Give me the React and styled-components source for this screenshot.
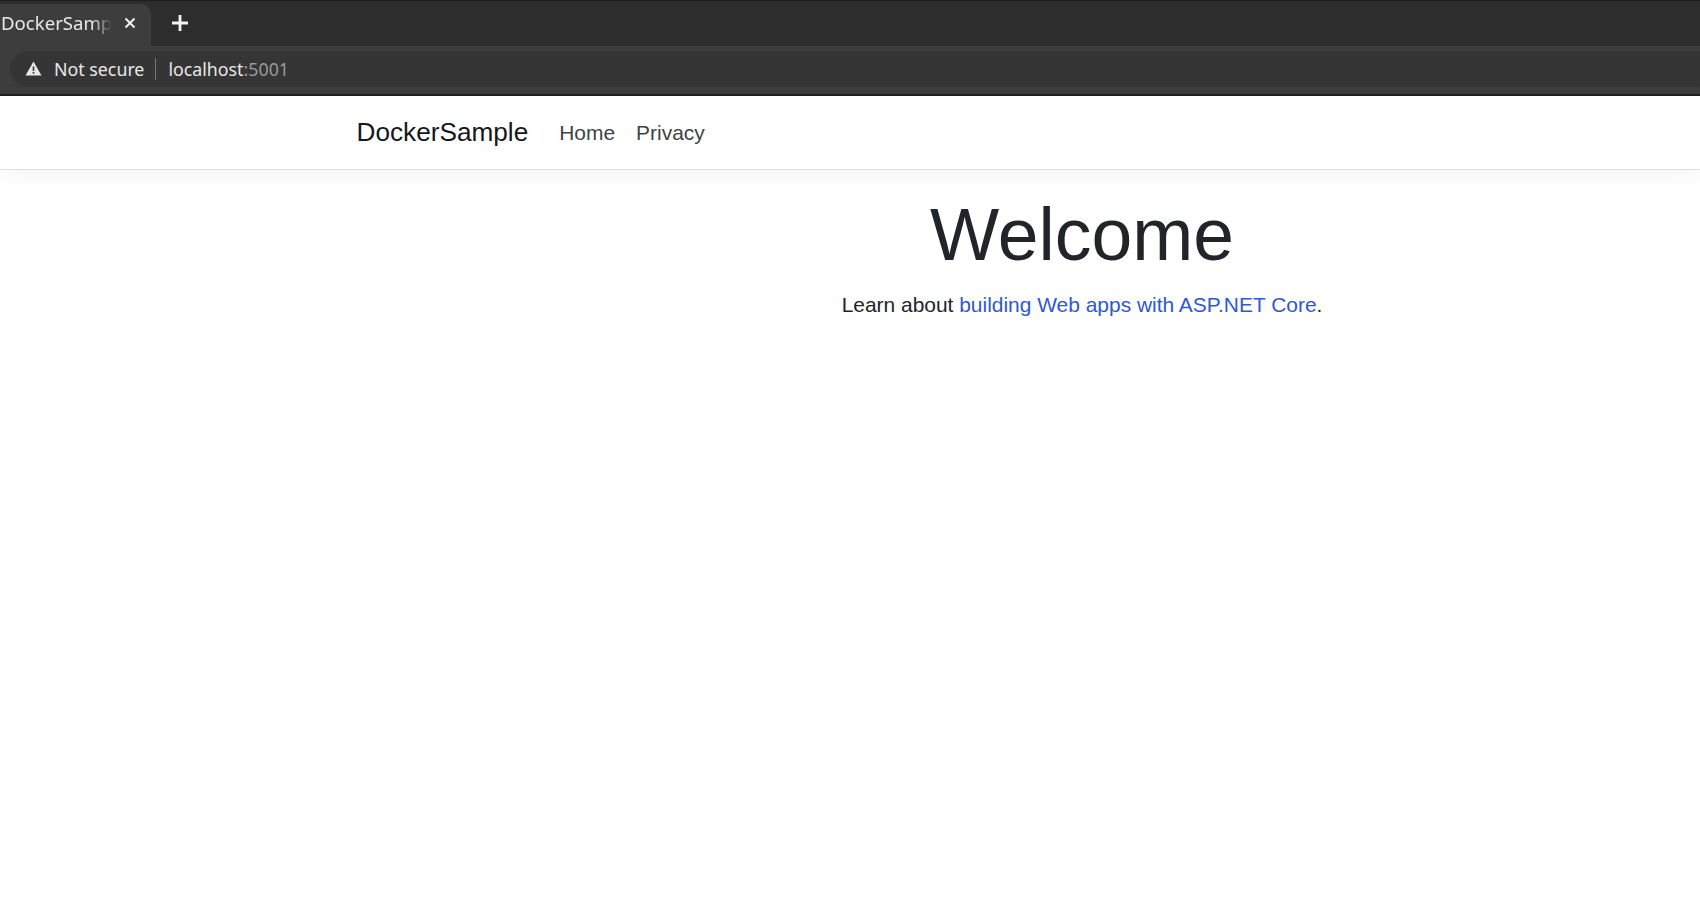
import React from 'react'
import styled, { createGlobalStyle } from 'styled-components'

const GlobalStyle = createGlobalStyle`
  html, body {
    margin: 0;
    padding: 0;
    height: 100%;
    background: #fff;
    overflow: hidden;
  }
`
const Page = styled.div`
  width: 1700px;
  height: 921px;
  overflow: hidden;
  background: #fff;
  display: flex;
  flex-direction: column;
`
const Chrome = styled.div`
  height: 96px;
  flex: none;
  box-sizing: border-box;
  background: #3d3d3d;
  border-bottom: 2px solid #1f1f1f;
  font-family: "Noto Sans", sans-serif;
`
const TabStrip = styled.div`
  height: 46px;
  box-sizing: border-box;
  padding-top: 3px;
  background: #2d2d2d;
  border-top: 1px solid #1c1c1c;
  display: flex;
  align-items: stretch;
`
const Tab = styled.div`
  width: 151px;
  box-sizing: border-box;
  background: #3d3d3d;
  border-radius: 0 10px 0 0;
  display: flex;
  align-items: center;
  padding: 0 0 5px 1px;
  color: #e8e8e8;
  font-size: 18.6px;
`
const TabTitle = styled.span`
  width: 111px;
  overflow: hidden;
  white-space: nowrap;
  -webkit-mask-image: linear-gradient(to right, #000 82%, transparent 100%);
  mask-image: linear-gradient(to right, #000 82%, transparent 100%);
`
const TabClose = styled.svg`
  width: 12px;
  height: 12px;
  margin-left: 12px;
`
const NewTab = styled.svg`
  width: 16px;
  height: 16px;
  margin: 11px 0 0 21px;
`
const Toolbar = styled.div`
  height: 47px;
  display: flex;
  align-items: center;
  padding: 0 0 2px 10px;
  box-sizing: border-box;
`
const Omnibox = styled.div`
  flex: 1;
  height: 36px;
  background: #353535;
  border-radius: 18px 0 0 18px;
  display: flex;
  align-items: center;
  padding-left: 15px;
  font-size: 17.8px;
  color: #e8e8e8;
`
const WarnIcon = styled.svg`
  width: 17px;
  height: 15px;
  margin-right: 12px;
`
const Divider = styled.span`
  width: 1px;
  height: 22px;
  background: #777;
  margin: 0 12px 0 11px;
`
const Port = styled.span`
  color: #9a9a9a;
`
const Navbar = styled.nav`
  height: 74px;
  flex: none;
  box-sizing: border-box;
  border-bottom: 1px solid #dee2e6;
  box-shadow: 0 4px 24px rgba(0, 0, 0, 0.05);
  display: flex;
  align-items: center;
  padding-left: 356.5px;
  font-family: "Liberation Sans", Arial, sans-serif;
`
const Brand = styled.a`
  font-size: 26.2px;
  color: #15181b;
  margin-right: 31px;
`
const NavLink = styled.a`
  font-size: 20.95px;
  color: #3f4347;
  margin-right: 21px;
`
const Main = styled.main`
  width: 1490px;
  margin-left: 337px;
  text-align: center;
  font-family: "Liberation Sans", Arial, sans-serif;
  color: #212529;
`
const Title = styled.h1`
  font-size: 73.3px;
  font-weight: 300;
  line-height: 1.2;
  margin: 22px 0 9px;
`
const Lead = styled.p`
  font-size: 20.95px;
  line-height: 1.5;
  margin: 0;
`
const DocLink = styled.a`
  color: #2f58d2;
`

export default function App() {
  return (
    <Page>
      <GlobalStyle />
      <Chrome>
        <TabStrip>
          <Tab>
            <TabTitle>DockerSample</TabTitle>
            <TabClose viewBox="0 0 12 12">
              <path d="M1.5 1.5l9 9M10.5 1.5l-9 9" stroke="#f0f0f0" strokeWidth="2" fill="none" />
            </TabClose>
          </Tab>
          <NewTab viewBox="0 0 16 16">
            <path d="M8 0v16M0 8h16" stroke="#f4f4f4" strokeWidth="2.8" fill="none" />
          </NewTab>
        </TabStrip>
        <Toolbar>
          <Omnibox>
            <WarnIcon viewBox="0 0 17 15">
              <path fillRule="evenodd" d="M8.5 0.5L16.5 14.5H0.5ZM7.7 5.5v4.5h1.6V5.5ZM7.7 11v1.7h1.6V11Z" fill="#e8e8e8" />
            </WarnIcon>
            Not secure
            <Divider />
            localhost<Port>:5001</Port>
          </Omnibox>
        </Toolbar>
      </Chrome>
      <Navbar>
        <Brand>DockerSample</Brand>
        <NavLink>Home</NavLink>
        <NavLink>Privacy</NavLink>
      </Navbar>
      <Main>
        <Title>Welcome</Title>
        <Lead>
          Learn about <DocLink>building Web apps with ASP.NET Core</DocLink>.
        </Lead>
      </Main>
    </Page>
  )
}
